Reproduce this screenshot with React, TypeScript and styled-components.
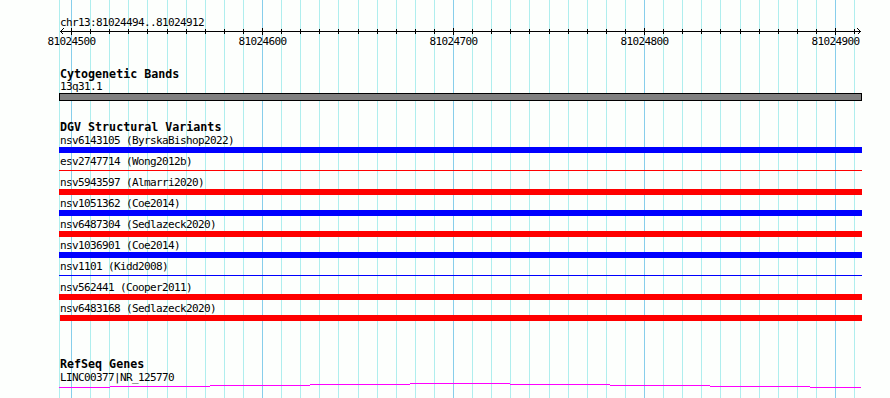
import React from 'react';
import styled, { createGlobalStyle } from 'styled-components';

const START = 81024494;
const LEFT = 59;
const TRACK_W = 803;
const SCALE = 1.91;
const BG = '#fdfffd';

const xOf = (pos: number) => Math.round(LEFT + 0.6 + (pos - START) * SCALE);

const gridPositions: number[] = [];
for (let p = 81024500; p <= 81024910; p += 10) gridPositions.push(p);

const GlobalStyle = createGlobalStyle`
  html, body { margin: 0; padding: 0; background: ${BG}; }
  #root { width: 890px; height: 398px; }
`;

const Page = styled.div`
  position: relative;
  width: 890px;
  height: 398px;
  overflow: hidden;
  background: ${BG};
  font-family: "DejaVu Sans Mono", "Liberation Mono", monospace;
  color: #000;
`;

const GridLayer = styled.svg`
  position: absolute;
  left: 0;
  top: 0;
  z-index: 0;
`;

const Content = styled.div`
  position: relative;
  z-index: 1;
  width: ${TRACK_W}px;
  padding-left: ${LEFT}px;
  display: flex;
  flex-direction: column;
`;

const Label = styled.div<{ $mt?: number; $lh?: number }>`
  margin-top: ${(p) => p.$mt ?? 0}px;
  padding-left: 1px;
  font-size: 11px;
  letter-spacing: -0.62px;
  line-height: ${(p) => p.$lh ?? 13}px;
  height: ${(p) => p.$lh ?? 13}px;
  white-space: pre;
`;

const TrackTitle = styled.div<{ $mt: number }>`
  margin-top: ${(p) => p.$mt}px;
  padding-left: 1px;
  font-size: 11.67px;
  font-weight: bold;
  line-height: 13px;
  height: 13px;
  white-space: pre;
`;

const RulerSvg = styled.svg`
  display: block;
  margin-top: -1px;
`;

const TickLabels = styled.div`
  position: relative;
  height: 13px;
`;

const TickLabel = styled.span`
  position: absolute;
  top: 0;
  width: 48px;
  text-align: center;
  font-size: 11px;
  letter-spacing: -0.62px;
  line-height: 13px;
`;

const Band = styled.div`
  box-sizing: border-box;
  width: ${TRACK_W}px;
  height: 8px;
  background: #808080;
  border: 1px solid #000;
`;

const FeatureRow = styled.div`
  display: flex;
  flex-direction: column;
  margin-bottom: 2px;
`;

const BarSlot = styled.div`
  height: 6px;
  display: flex;
  flex-direction: column;
`;

const Bar = styled.div<{ $color: string; $thick: boolean; $start: number }>`
  margin-top: ${(p) => (p.$thick ? 0 : 2)}px;
  margin-left: ${(p) => p.$start}px;
  height: ${(p) => (p.$thick ? 6 : 1)}px;
  background: ${(p) => p.$color};
  width: ${(p) => TRACK_W - p.$start}px;
`;

const GeneSvg = styled.svg`
  display: block;
  margin-top: -1px;
`;

type Feature = { name: string; color: string; thick: boolean; start?: number };

const BLUE = '#0000ff';
const RED = '#ff0000';

const features: Feature[] = [
  { name: 'nsv6143105 (ByrskaBishop2022)', color: BLUE, thick: true },
  { name: 'esv2747714 (Wong2012b)', color: RED, thick: false },
  { name: 'nsv5943597 (Almarri2020)', color: RED, thick: true },
  { name: 'nsv1051362 (Coe2014)', color: BLUE, thick: true },
  { name: 'nsv6487304 (Sedlazeck2020)', color: RED, thick: true },
  { name: 'nsv1036901 (Coe2014)', color: BLUE, thick: true },
  { name: 'nsv1101 (Kidd2008)', color: BLUE, thick: false },
  { name: 'nsv562441 (Cooper2011)', color: RED, thick: true },
  { name: 'nsv6483168 (Sedlazeck2020)', color: RED, thick: true, start: 1 },
];

const geneSegments: [number, number, number][] = [
  [59, 110, 4],
  [110, 210, 3],
  [210, 310, 2],
  [310, 410, 1],
  [410, 510, 0],
  [510, 610, 1],
  [610, 710, 2],
  [710, 810, 3],
  [810, 861, 4],
];

const majorLabels = [81024500, 81024600, 81024700, 81024800, 81024900];

export default function App() {
  return (
    <>
      <GlobalStyle />
      <Page>
        <GridLayer width={890} height={398} shapeRendering="crispEdges">
          <rect x={LEFT} y={0} width={1} height={398} fill="#afeeee" />
          {gridPositions.map((p) => (
            <rect
              key={p}
              x={xOf(p)}
              y={0}
              width={1}
              height={398}
              fill={p % 100 === 0 ? '#87ceeb' : '#afeeee'}
            />
          ))}
        </GridLayer>
        <Content>
          <Label $mt={16}>chr13:81024494..81024912</Label>
          <RulerSvg width={TRACK_W} height={7} shapeRendering="crispEdges">
            <rect x={1} y={3} width={801} height={1} fill="#000" />
            {gridPositions.map((p) => {
              const x = xOf(p) - LEFT;
              const major = p % 100 === 0;
              return (
                <rect
                  key={p}
                  x={x}
                  y={major ? 0 : 1}
                  width={1}
                  height={major ? 7 : 5}
                  fill="#000"
                />
              );
            })}
            <path d="M4.5 0.5 L1.5 3.5 L4.5 6.5" stroke="#000" strokeWidth={1} fill="none" />
            <path d="M798.5 0.5 L801.5 3.5 L798.5 6.5" stroke="#000" strokeWidth={1} fill="none" />
          </RulerSvg>
          <TickLabels>
            {majorLabels.map((p) => (
              <TickLabel key={p} style={{ left: xOf(p) - LEFT - 24 + 0.5 }}>
                {p}
              </TickLabel>
            ))}
          </TickLabels>

          <TrackTitle $mt={20}>Cytogenetic Bands</TrackTitle>
          <Label $lh={12}>13q31.1</Label>
          <Band />

          <TrackTitle $mt={20}>DGV Structural Variants</TrackTitle>
          {features.map((f) => (
            <FeatureRow key={f.name}>
              <Label>{f.name}</Label>
              <BarSlot>
                <Bar $color={f.color} $thick={f.thick} $start={f.start ?? 0} />
              </BarSlot>
            </FeatureRow>
          ))}

          <TrackTitle $mt={35}>RefSeq Genes</TrackTitle>
          <Label>LINC00377|NR_125770</Label>
          <GeneSvg width={TRACK_W} height={6} shapeRendering="crispEdges">
            {geneSegments.map(([a, b, y]) => (
              <rect key={a} x={a - LEFT} y={y} width={b - a} height={1} fill="#ff00ff" />
            ))}
          </GeneSvg>
        </Content>
      </Page>
    </>
  );
}
